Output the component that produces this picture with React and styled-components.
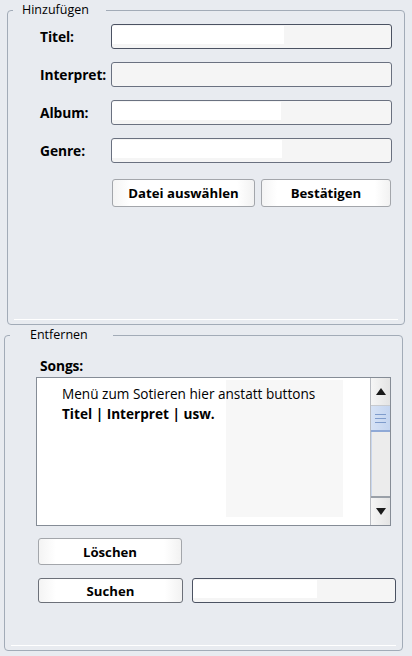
import React from "react";
import styled, { createGlobalStyle } from "styled-components";

const Global = createGlobalStyle`
  html, body {
    margin: 0;
    background: #e8ebf0;
  }
  body {
    font-family: "Open Sans", "Noto Sans", sans-serif;
    font-size: 12.5px;
    color: #000;
  }
`;

const Page = styled.div`
  display: flex;
  flex-direction: column;
  gap: 2px;
  padding-top: 2px;
  width: 412px;
  height: 656px;
  box-sizing: border-box;
`;

const Group = styled.fieldset`
  box-sizing: border-box;
  margin: 0 ${(p) => p.$right}px 0 ${(p) => p.$left}px;
  padding: 0;
  min-width: 0;
  border: 1px solid #a2abb7;
  border-radius: 4px;
`;

const GroupBody = styled.div`
  display: flex;
  flex-direction: column;
  height: ${(p) => p.$height}px;
`;

const BottomRule = styled.div`
  margin: auto 6px 4px;
  height: 1px;
  background: #fff;
`;

const Legend = styled.legend`
  margin-left: 5px;
  padding: 0 ${(p) => p.$padRight}px 0 ${(p) => p.$padLeft}px;
  line-height: 16px;
  font-size: 12.5px;
`;

const Form = styled.div`
  display: grid;
  grid-template-columns: 71px 281px;
  grid-auto-rows: 25px;
  row-gap: 13px;
  align-items: center;
  padding: 6px 0 0 32px;
`;

const Label = styled.label`
  font-weight: 700;
  font-size: 13.8px;
  white-space: nowrap;
  letter-spacing: -0.1px;
`;

const Field = styled.div`
  box-sizing: border-box;
  height: 25px;
  width: ${(p) => p.$width || "100%"};
  border: 1px solid ${(p) => (p.$focus ? "#4b5262" : "#6a7180")};
  border-radius: 3px;
  background: #f5f5f5;
  background-image: ${(p) =>
    p.$white ? "linear-gradient(#fff, #fff)" : "none"};
  background-repeat: no-repeat;
  background-position: 0 1px;
  background-size: ${(p) => p.$white || 0}px 18px;
`;

const ButtonRow = styled.div`
  grid-column: 2;
  display: flex;
  gap: 6px;
  margin-top: 3px;
  padding-left: 1px;
  align-self: start;
`;

const Button = styled.button`
  box-sizing: border-box;
  width: ${(p) => p.$width}px;
  height: ${(p) => p.$height || 28}px;
  padding: 0;
  border: 1px solid ${(p) => (p.$dark ? "#6c7079" : "#a3a6ab")};
  border-radius: 3px;
  background: linear-gradient(to right, #f4f4f4, #fff 12%, #fff 88%, #f2f2f2);
  font-family: inherit;
  font-size: 13.2px;
  font-weight: 700;
  color: #000;
`;

const RemoveBody = styled.div`
  display: flex;
  flex-direction: column;
  padding: 15px 0 0 31px;
`;

const SongsLabel = styled(Label)`
  line-height: 16px;
  padding-left: 4px;
  margin-bottom: 3px;
`;

const ListBox = styled.div`
  box-sizing: border-box;
  display: flex;
  width: 355px;
  height: 149px;
  border: 1px solid #858c96;
  background: #fff;
`;

const ListContent = styled.div`
  flex: 1;
  padding: 6px 0 0 25px;
  line-height: 20px;
  font-size: 13.6px;
  background: #fff linear-gradient(#f7f7f7, #f7f7f7) no-repeat 189px 2px /
    117px 137px;
`;

const ListLine = styled.div`
  font-weight: ${(p) => (p.$bold ? 700 : 400)};
  white-space: nowrap;
`;

const ScrollBar = styled.div`
  width: 19px;
  display: flex;
  flex-direction: column;
  border-left: 1px solid #b9bcc2;
  background: #ebebeb;
`;

const ScrollButton = styled.div`
  height: 27px;
  display: flex;
  align-items: center;
  justify-content: center;
  background: linear-gradient(to right, #f6f6f6, #e4e4e4);
  border-bottom: ${(p) => (p.$top ? "1px solid #c8cbd0" : "none")};
  border-top: ${(p) => (p.$top ? "none" : "2px solid #9aa0a8")};
`;

const Thumb = styled.div`
  height: 24px;
  display: flex;
  flex-direction: column;
  justify-content: center;
  align-items: center;
  gap: 3px;
  background: linear-gradient(to right, #d6e2f5, #c4d5f0);
  border-bottom: 2px solid #8fa9d6;

  span {
    width: 11px;
    height: 1px;
    background: #7f9ccc;
  }
`;

const Track = styled.div`
  flex: 1;
  background: linear-gradient(to right, #c9d7ee 0 1px, #ececec 1px);
`;

const RemoveButtons = styled.div`
  display: flex;
  flex-direction: column;
  gap: 13px;
  margin: 12px 0 0 2px;
`;

const SearchRow = styled.div`
  display: flex;
  gap: 9px;
  align-items: center;
`;

const Triangle = ({ down }) => (
  <svg width="10" height="7" viewBox="0 0 10 7">
    <path d={down ? "M0 0 H10 L5 7 Z" : "M5 0 L10 7 H0 Z"} fill="#1a1a1a" />
  </svg>
);

export default function App() {
  return (
    <Page>
      <Global />
      <Group $left={7} $right={7}>
        <Legend $padLeft={9} $padRight={17}>
          Hinzufügen
        </Legend>
        <GroupBody $height={306}>
          <Form>
            <Label>Titel:</Label>
            <Field $focus $white={172} />
            <Label>Interpret:</Label>
            <Field />
            <Label>Album:</Label>
            <Field $white={169} />
            <Label>Genre:</Label>
            <Field $white={170} />
            <ButtonRow>
              <Button $width={143}>Datei auswählen</Button>
              <Button $width={130}>Bestätigen</Button>
            </ButtonRow>
          </Form>
          <BottomRule />
        </GroupBody>
      </Group>

      <Group $left={4} $right={9}>
        <Legend $padLeft={20} $padRight={25}>
          Entfernen
        </Legend>
        <GroupBody $height={307}>
          <RemoveBody>
            <SongsLabel>Songs:</SongsLabel>
            <ListBox>
              <ListContent>
                <ListLine>Menü zum Sotieren hier anstatt buttons</ListLine>
                <ListLine $bold>Titel | Interpret | usw.</ListLine>
              </ListContent>
              <ScrollBar>
                <ScrollButton $top>
                  <Triangle />
                </ScrollButton>
                <Thumb>
                  <span />
                  <span />
                  <span />
                </Thumb>
                <Track />
                <ScrollButton>
                  <Triangle down />
                </ScrollButton>
              </ScrollBar>
            </ListBox>
            <RemoveButtons>
              <Button $width={144} $height={27}>
                Löschen
              </Button>
              <SearchRow>
                <Button $width={145} $height={25} $dark>
                  Suchen
                </Button>
                <Field $width="204px" $white={124} $focus />
              </SearchRow>
            </RemoveButtons>
          </RemoveBody>
          <BottomRule />
        </GroupBody>
      </Group>
    </Page>
  );
}
